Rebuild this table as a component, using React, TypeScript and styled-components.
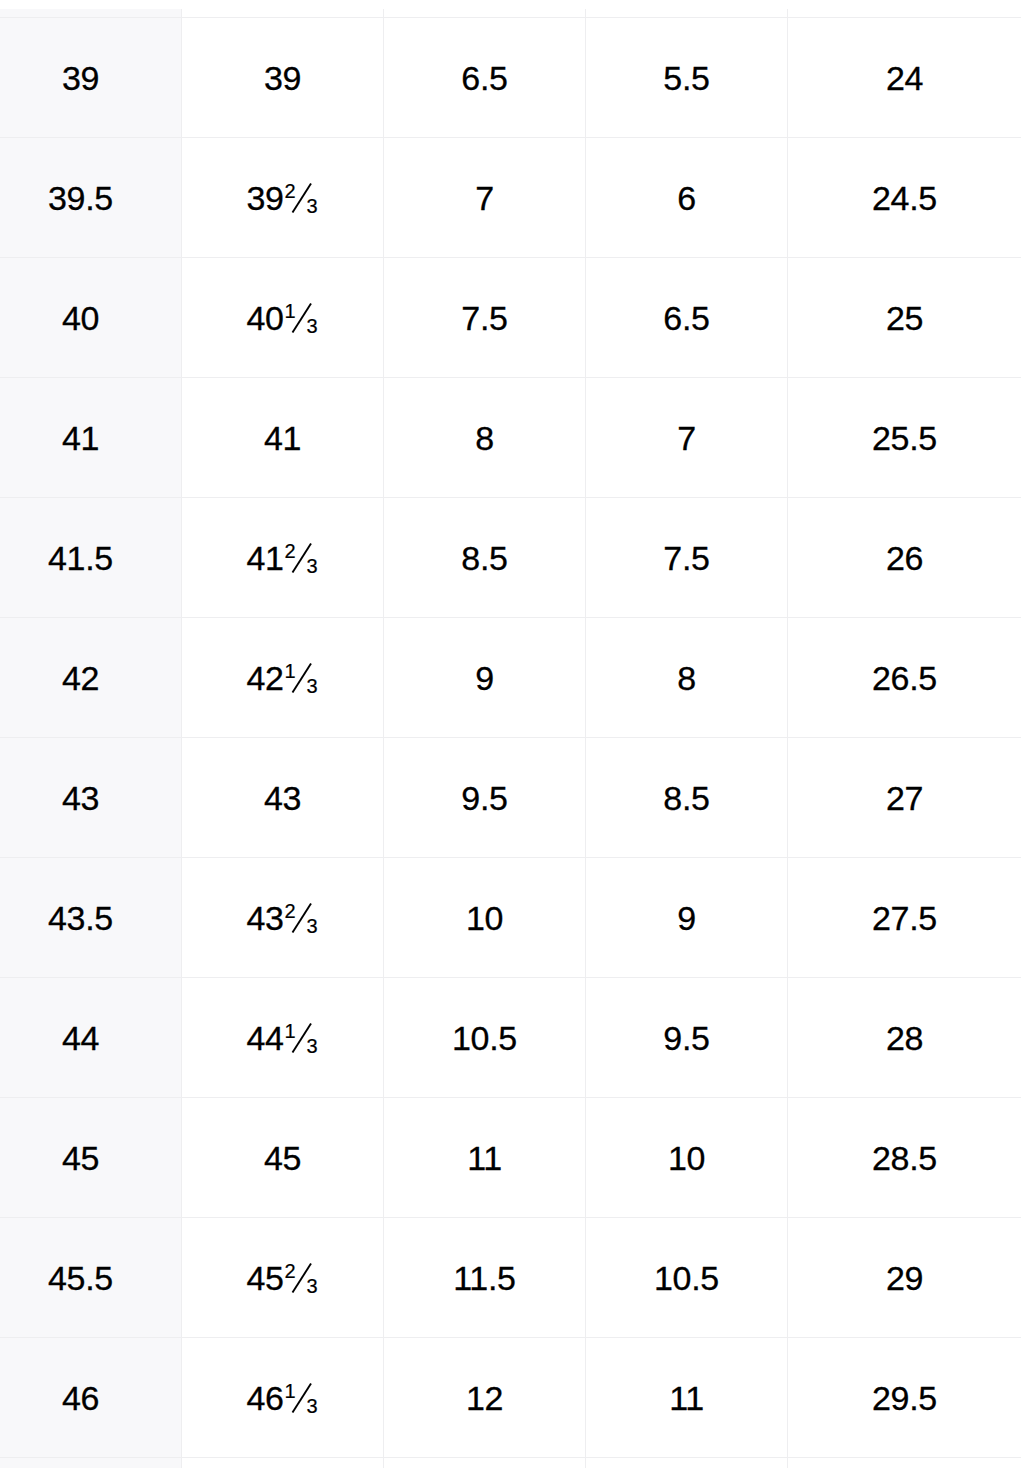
import React from "react";
import styled, { createGlobalStyle } from "styled-components";

const GlobalStyle = createGlobalStyle`
    html, body {
        margin: 0;
        padding: 0;
        background: #ffffff;
    }
    body {
        font-family: "Liberation Sans", "DejaVu Sans", Arial, sans-serif;
        color: #000000;
        height: 1468px;
        overflow: hidden;
    }
`;

const Page = styled.div`
    padding-top: 9px;
    height: 1459px;
    overflow: hidden;
`;

const Row = styled.div<{ $height: number }>`
    display: grid;
    grid-template-columns: 181px 202px 202px 202px 1fr;
    height: ${(p) => p.$height}px;
    border-bottom: 1px solid #eeeef0;
`;

const Cell = styled.div<{ $first?: boolean }>`
    display: flex;
    align-items: center;
    justify-content: center;
    background: ${(p) => (p.$first ? "#f8f8fa" : "#ffffff")};
    border-left: ${(p) => (p.$first ? "none" : "1px solid #eeeef0")};
    padding-right: ${(p) => (p.$first ? "20px" : "0")};
`;

const Value = styled.span`
    display: flex;
    align-items: center;
    font-size: 34px;
    line-height: 1;
    letter-spacing: -0.3px;
    -webkit-text-stroke: 0.3px #000;
`;

// stacked fraction: numerator, slash and denominator share one grid cell
const Frac = styled.span`
    display: grid;
    width: 34px;
    height: 30px;
    margin-left: 1px;
    font-size: 20px;
    line-height: 1;
    letter-spacing: 0;
    -webkit-text-stroke: 0.2px #000;
    & > * {
        grid-area: 1 / 1;
    }
`;

const Num = styled.span`
    justify-self: start;
    align-self: start;
    margin-top: -2px;
`;

const Den = styled.span`
    justify-self: end;
    align-self: end;
    margin-bottom: -3px;
    margin-right: 1px;
`;

const SlashSvg = styled.svg`
    justify-self: start;
    align-self: start;
`;

const Fraction: React.FC<{ num: string; den: string }> = ({ num, den }) => (
    <Frac>
        <SlashSvg width="34" height="30" viewBox="0 0 34 30">
            <line x1="7.5" y1="29.5" x2="26" y2="0.5" stroke="#000" strokeWidth="1.9" />
        </SlashSvg>
        <Num>{num}</Num>
        <Den>{den}</Den>
    </Frac>
);

type Size = { whole: string; num?: string; den?: string };

const v = (whole: string, num?: string, den?: string): Size => ({ whole, num, den });

const sizes: Size[][] = [
    [v("39"), v("39"), v("6.5"), v("5.5"), v("24")],
    [v("39.5"), v("39", "2", "3"), v("7"), v("6"), v("24.5")],
    [v("40"), v("40", "1", "3"), v("7.5"), v("6.5"), v("25")],
    [v("41"), v("41"), v("8"), v("7"), v("25.5")],
    [v("41.5"), v("41", "2", "3"), v("8.5"), v("7.5"), v("26")],
    [v("42"), v("42", "1", "3"), v("9"), v("8"), v("26.5")],
    [v("43"), v("43"), v("9.5"), v("8.5"), v("27")],
    [v("43.5"), v("43", "2", "3"), v("10"), v("9"), v("27.5")],
    [v("44"), v("44", "1", "3"), v("10.5"), v("9.5"), v("28")],
    [v("45"), v("45"), v("11"), v("10"), v("28.5")],
    [v("45.5"), v("45", "2", "3"), v("11.5"), v("10.5"), v("29")],
    [v("46"), v("46", "1", "3"), v("12"), v("11"), v("29.5")],
];

const emptyRow: Size[] = [v(""), v(""), v(""), v(""), v("")];

const SizeRow: React.FC<{ values: Size[]; height: number }> = ({ values, height }) => (
    <Row $height={height}>
        {values.map((s, i) => (
            <Cell key={i} $first={i === 0}>
                <Value>
                    {s.whole}
                    {s.num && s.den ? <Fraction num={s.num} den={s.den} /> : null}
                </Value>
            </Cell>
        ))}
    </Row>
);

export default function App() {
    return (
        <>
            <GlobalStyle />
            <Page>
                <SizeRow values={emptyRow} height={8} />
                {sizes.map((row) => (
                    <SizeRow key={row[0].whole} values={row} height={119} />
                ))}
                <SizeRow values={emptyRow} height={119} />
            </Page>
        </>
    );
}
